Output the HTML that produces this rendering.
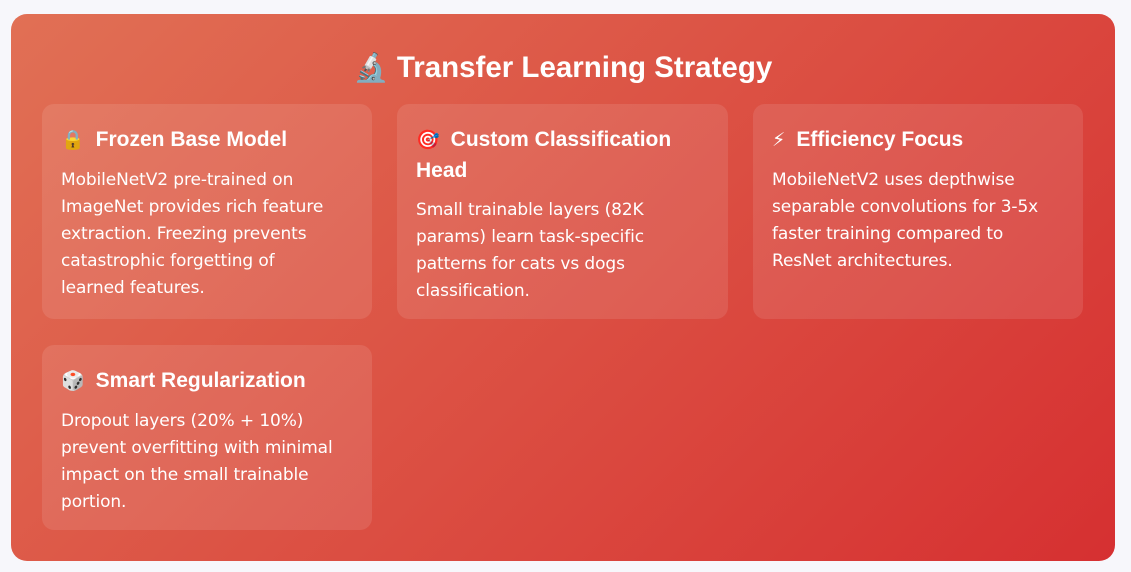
<!DOCTYPE html>
<html><head><meta charset="utf-8"><style>
body{margin:0;background:#f7f7fb;width:1131px;height:572px;overflow:hidden;font-family:"Liberation Sans","DejaVu Sans",sans-serif;}
.box{position:absolute;left:11px;top:14px;width:1104px;height:547px;border-radius:16px;background:linear-gradient(135deg,#e17055 0%,#d63031 100%);color:#fff;}
h1{position:absolute;left:0;right:0;top:36px;margin:0;text-align:center;font-size:29.5px;font-weight:bold;line-height:36px;}
.card{position:absolute;width:330px;box-sizing:border-box;padding:21px 26px 0 19px;background:rgba(255,255,255,0.1);border-radius:12px;}
.card h3{margin:0 0 11px;font-size:21px;line-height:30px;font-weight:bold;}
.card p{margin:0;font-family:"DejaVu Sans",sans-serif;font-size:17px;line-height:27px;letter-spacing:-0.1px;}
.ic{font-size:19px;margin-right:11px;}
</style></head><body>
<div class="box">
<h1><span style="font-size:28px">🔬</span> Transfer Learning Strategy</h1>
<div class="card" style="left:31px;top:90px;height:215px"><h3><span class="ic">🔒</span>Frozen Base Model</h3><p>MobileNetV2 pre-trained on ImageNet provides rich feature extraction. Freezing prevents catastrophic forgetting of<br>learned features.</p></div>
<div class="card" style="left:386px;top:90px;height:215px;width:331px"><h3><span class="ic">🎯</span>Custom Classification Head</h3><p>Small trainable layers (82K params) learn task-specific patterns for cats vs dogs classification.</p></div>
<div class="card" style="left:742px;top:90px;height:215px"><h3><span class="ic">⚡</span>Efficiency Focus</h3><p>MobileNetV2 uses depthwise separable convolutions for 3-5x faster training compared to ResNet architectures.</p></div>
<div class="card" style="left:31px;top:331px;height:185px"><h3><span class="ic">🎲</span>Smart Regularization</h3><p>Dropout layers (20% + 10%) prevent overfitting with minimal impact on the small trainable portion.</p></div>
</div>
</body></html>
